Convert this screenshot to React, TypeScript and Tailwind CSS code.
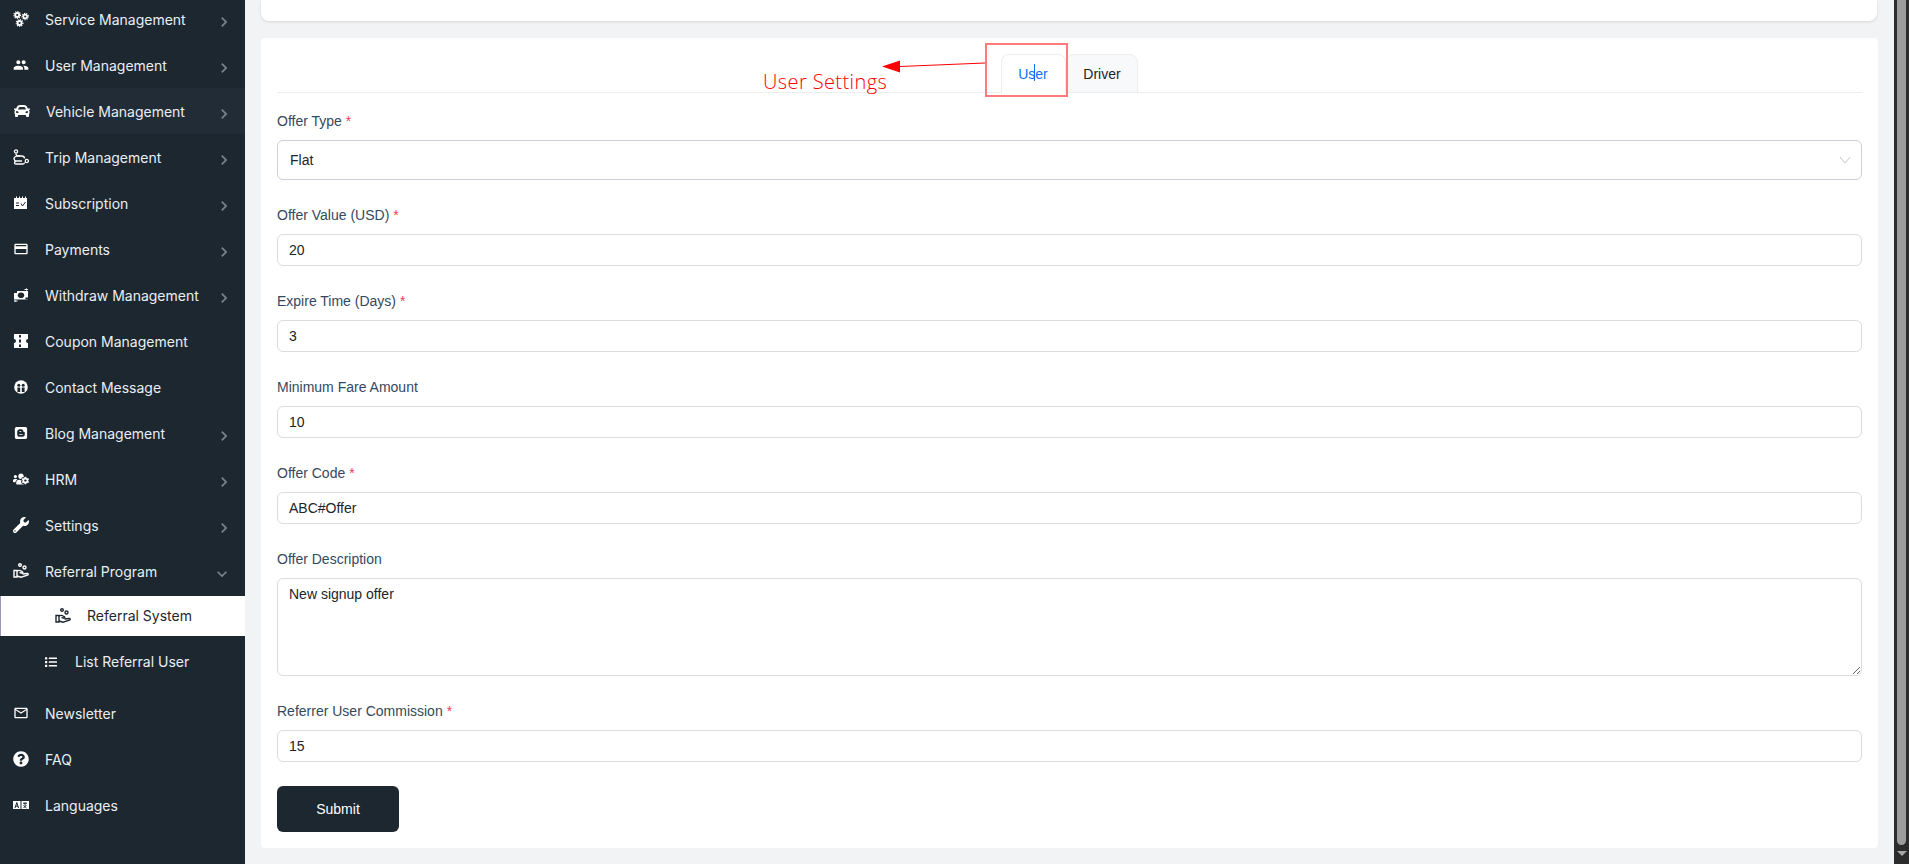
import React from "react";
import { FaCar, FaList, FaQuestionCircle, FaUsersCog, FaWrench, FaBlogger } from "react-icons/fa";
import { MdPeople, MdMailOutline, MdCreditCard, MdChevronRight, MdKeyboardArrowDown } from "react-icons/md";

const BG = "#1d2730";

const Gear = ({ cx, cy, r }: { cx: number; cy: number; r: number }) => (
  <g fill="none" stroke="currentColor">
    <circle cx={cx} cy={cy} r={r * 0.55} strokeWidth={r * 0.5} />
    <circle cx={cx} cy={cy} r={r * 0.92} strokeWidth={r * 0.35} strokeDasharray="1.1 1.1" />
  </g>
);
const Gears = () => (
  <svg width="16" height="16" viewBox="0 0 16 16">
    <Gear cx={4.2} cy={4} r={3.6} />
    <Gear cx={12.2} cy={5.5} r={3.4} />
    <Gear cx={6.6} cy={12} r={3.6} />
  </svg>
);
const Trip = () => (
  <svg width="16" height="16" viewBox="0 0 16 16" fill="none" stroke="currentColor" strokeWidth="1.3">
    <circle cx="3" cy="2.5" r="1.6" />
    <circle cx="13.8" cy="12" r="1.6" />
    <path d="M3 4.5c0 1.5.5 2.5 2 2.5h3.5c2 0 3 1 3 2.5" />
    <path d="M7 7c-6-.5-7 2.5-5 4.5 .5.5 1 .5 2 .5H9M3 12c-2 .5-2 3 0 3h7c1.500 0 1.500-1 1.500-1.500" />
  </svg>
);
const Subscription = () => (
  <svg width="14" height="14" viewBox="0 0 14 14">
    <path fill="currentColor" d="M0 2h2V0.500h1V2h2V0.500h1V2h2V0.500h1V2h2V0.500h1V2h1v11H0z" />
    <path fill="none" stroke={BG} strokeWidth="1" d="M2 7h3M2 9.500h3M7 7.500l1.500 2.500L11.500 6" />
  </svg>
);
const Contact = () => (
  <svg width="14" height="14" viewBox="0 0 14 14">
    <circle cx="7" cy="7" r="6.800" fill="currentColor" />
    <circle cx="4.800" cy="5.200" r="1.500" fill={BG} />
    <circle cx="9.200" cy="5.200" r="1.500" fill={BG} />
    <path fill={BG} d="M3.400 12V7.600h2.800V12zM7.800 12V7.600h2.800V12z" />
  </svg>
);
const Languages = () => (
  <svg width="16" height="10" viewBox="0 0 16 10">
    <path fill="currentColor" d="M0 1h7.500v8H0zM8.500 1H16v8H8.500z" />
    <path fill="none" stroke={BG} strokeWidth="1" d="M2 8l1.800-5.500L5.600 8M2.600 6.200h2.400M10 3.200h4M12 2.500v3M10.500 8l3-3M10.500 5.500l3 2.500" />
  </svg>
);
const Withdraw = () => (
  <svg width="16" height="16" viewBox="0 0 16 16">
    <path fill="currentColor" d="M1 4h14v8.500H1z" />
    <ellipse cx="8" cy="8.200" rx="3.200" ry="2.800" fill={BG} />
    <path fill={BG} d="M1 4h3v2H1zM12.500 10.500H15v2h-2.500z" />
    <path fill="none" stroke="currentColor" strokeWidth="1" d="M11.500 2.500h3l-1-1M14.500 2.500l-1 1M4.500 14H1.500l1-1M1.500 14l1 1" />
  </svg>
);
const Coupon = () => (
  <svg width="14" height="14" viewBox="0 0 14 14">
    <path
      fill="currentColor"
      fillRule="evenodd"
      d="M0 0h14v5a2 2 0 000 4v5H0V9a2 2 0 000-4zM5 1v2.500h2V1zM5 5.500V8.500h2V5.500zM5 10.500V13h2v-2.500z"
    />
  </svg>
);
const Hand = ({ size = 16 }: { size?: number }) => (
  <svg width={size} height={size} viewBox="0 0 16 16" fill="none" stroke="currentColor" strokeWidth="1.400">
    <circle cx="7" cy="2" r="1.300" />
    <circle cx="11.500" cy="4.500" r="1.500" />
    <path d="M4 7.500H1v6.500h3zM4 8c1.500-.8 3-.8 4.200 0l1.300.8c.7.600 0 1.500-.8 1.200L6.500 9.600" />
    <path d="M4 13l4 1.200 6.500-2c1-.5.800-1.800-.2-1.700L9.500 11" />
  </svg>
);

type Item = { icon: React.ReactNode; label: string; arrow?: boolean; hover?: boolean; shift?: boolean };

const items: Item[] = [
  { icon: <Gears />, label: "Service Management", arrow: true },
  { icon: <MdPeople size={18} />, label: "User Management", arrow: true },
  { icon: <FaCar size={16} className="translate-x-px" />, label: "Vehicle Management", arrow: true, hover: true, shift: true },
  { icon: <Trip />, label: "Trip Management", arrow: true },
  { icon: <Subscription />, label: "Subscription", arrow: true },
  { icon: <MdCreditCard size={16} />, label: "Payments", arrow: true },
  { icon: <Withdraw />, label: "Withdraw Management", arrow: true },
  { icon: <Coupon />, label: "Coupon Management" },
  { icon: <Contact />, label: "Contact Message" },
  { icon: <FaBlogger size={14} />, label: "Blog Management", arrow: true },
  { icon: <FaUsersCog size={16} />, label: "HRM", arrow: true },
  { icon: <FaWrench size={16} />, label: "Settings", arrow: true },
];
const tail: Item[] = [
  { icon: <MdMailOutline size={16} />, label: "Newsletter" },
  { icon: <FaQuestionCircle size={16} />, label: "FAQ" },
  { icon: <Languages />, label: "Languages" },
];

function Row({ item }: { item: Item }) {
  return (
    <div className={`flex h-[46px] items-center pl-[13px] pr-[11px] ${item.hover ? "bg-[#222c36]" : ""}`}>
      <span className="flex w-[16px] shrink-0 justify-center text-white">{item.icon}</span>
      <span className={`flex-1 text-[14px] text-[#e9eef3] ${item.shift ? "ml-[17px]" : "ml-[16px]"}`}>{item.label}</span>
      {item.arrow && <MdChevronRight size={20} className="mt-[6px] text-[#7c848c]" />}
    </div>
  );
}

function Label({ text, req }: { text: string; req?: boolean }) {
  return (
    <label className="mb-[11px] block h-[16px] text-[14px] leading-[16px] text-[#34495e]">
      {text}
      {req && <span className="ml-[4px] text-[#f5365c]">*</span>}
    </label>
  );
}

function Field({ label, value, req }: { label: string; value: string; req?: boolean }) {
  return (
    <div className="mb-[27px]">
      <Label text={label} req={req} />
      <div className="flex h-[32px] items-center rounded-[6px] border border-[#dcdcdc] bg-white pl-[11px] text-[14px] text-[#212529]">
        {value}
      </div>
    </div>
  );
}

export default function App() {
  return (
    <div className="flex h-[864px] overflow-hidden bg-[#f2f3f5] font-['Liberation_Sans',sans-serif]">
      <aside className="h-full w-[245px] shrink-0 overflow-hidden bg-[#1d2730] font-['Inter',sans-serif]">
        <div className="-mt-[4px]">
          {items.map((i) => (
            <Row key={i.label} item={i} />
          ))}
          <div className="flex h-[48px] items-center pb-[2px] pl-[13px] pr-[13px]">
            <span className="flex w-[16px] shrink-0 justify-center text-white">
              <Hand />
            </span>
            <span className="ml-[16px] flex-1 text-[14px] text-[#e9eef3]">Referral Program</span>
            <MdKeyboardArrowDown size={20} className="mt-[6px] text-[#7c848c]" />
          </div>
          <div className="flex h-[40px] items-center border-l border-[#9a9ab5] bg-white pb-[1px] pl-[54px]">
            <span className="text-[#1d2730]">
              <Hand />
            </span>
            <span className="ml-[16px] text-[14px] text-[#1d2730]">Referral System</span>
          </div>
          <div className="mb-[2px] flex h-[52px] items-center pb-[1px] pl-[45px]">
            <FaList size={12} className="text-white" />
            <span className="ml-[18px] text-[14px] text-[#e9eef3]">List Referral User</span>
          </div>
          {tail.map((i) => (
            <Row key={i.label} item={i} />
          ))}
        </div>
      </aside>

      <main className="flex min-w-0 flex-1 flex-col pl-[16px] pr-[16px]">
        <div className="mr-px h-[21px] shrink-0 rounded-b-[8px] bg-white shadow-[0_1px_3px_rgba(0,0,0,0.12)]" />
        <section className="relative mt-[17px] rounded-[4px] bg-white px-[16px] pb-[16px]">
          <div className="flex h-[55px] items-end border-b border-[#eceef0] pl-[724px]">
            <div className="-mb-px flex h-[39px] w-[65px] items-center justify-center rounded-t-[8px] border border-[#eceef0] border-b-white bg-white pr-[1px] pt-[1px] text-[14px] text-[#0d6efd]">
              <span className="relative">
                User
                <span className="absolute left-[16px] top-0 h-[17px] w-px bg-[#0d6efd]" />
              </span>
            </div>
            <div className="-mb-px flex h-[39px] w-[72px] items-center justify-center rounded-t-[8px] border border-[#eceef0] bg-[#f8f9fa] pt-[1px] text-[14px] text-[#212529]">
              Driver
            </div>
          </div>

          <div className="pt-[20px]">
            <Label text="Offer Type" req />
            <div className="mb-[27px] flex h-[40px] items-center justify-between rounded-[6px] border border-[#d0ced8] bg-white pl-[12px] pr-[10px] text-[14px] text-[#212529]">
              Flat
              <svg width="12" height="8" viewBox="0 0 12 8" fill="none" stroke="#c4c6cc" strokeWidth="1">
                <path d="M1 1l5 6 5-6" />
              </svg>
            </div>
            <Field label="Offer Value (USD)" value="20" req />
            <Field label="Expire Time (Days)" value="3" req />
            <Field label="Minimum Fare Amount" value="10" />
            <Field label="Offer Code" value="ABC#Offer" req />
            <div className="mb-[27px]">
              <Label text="Offer Description" />
              <textarea
                readOnly
                value="New signup offer"
                className="block h-[98px] w-full rounded-[6px] border border-[#dcdcdc] bg-white px-[11px] py-[7px] text-[14px] leading-[17px] text-[#212529] outline-none"
              />
            </div>
            <Field label="Referrer User Commission" value="15" req />
            <button className="-mt-[3px] flex h-[46px] w-[122px] items-center justify-center rounded-[6px] bg-[#1d2730] text-[14px] text-white">
              Submit
            </button>
          </div>

          <div className="absolute left-[502px] top-[31px] font-['Open_Sans',sans-serif] text-[20px] font-light leading-[26px] tracking-[0.4px] text-[#ff0000]">
            User Settings
          </div>
          <div className="absolute left-[724px] top-[5px] h-[54px] w-[83px] border-2 border-[#ff7b7b]" />
          <svg className="absolute left-[620px] top-[14px]" width="106" height="24" viewBox="0 0 106 24">
            <path d="M104 11L19 14.500" stroke="#ff0000" strokeWidth="1.200" />
            <path d="M1 14.500L19 8.500v12z" fill="#ff0000" />
          </svg>
        </section>
      </main>

      <div className="flex h-full w-[15px] shrink-0 flex-col items-center bg-[#2c2c2c]">
        <div className="h-[845px] w-[9px] rounded-b-[5px] bg-[#9c9c9c]" />
        <div className="mt-[6px] h-0 w-0 border-x-[5px] border-t-[5px] border-x-transparent border-t-[#a8a8a8]" />
      </div>
    </div>
  );
}
